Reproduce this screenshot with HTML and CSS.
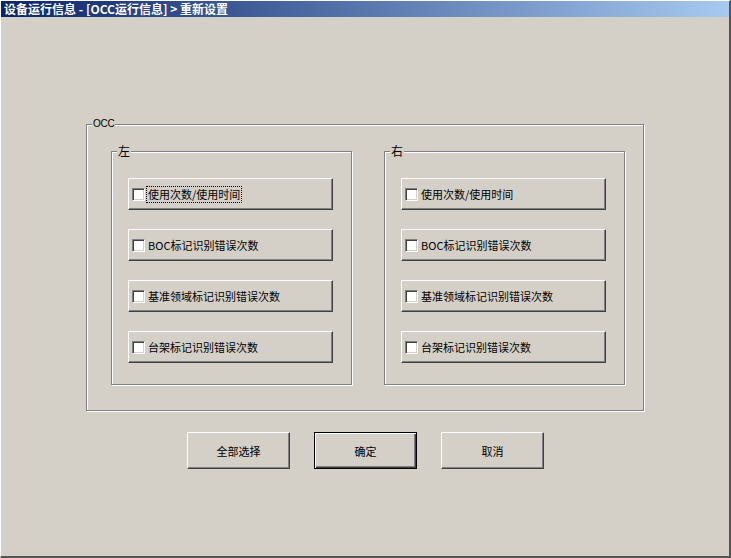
FILE: index.html
```html
<!DOCTYPE html>
<html lang="zh-CN">
<head>
    <meta charset="UTF-8">
    <title>设备运行信息 - [OCC运行信息] > 重新设置</title>
    <link rel="stylesheet" href="styles.css">
</head>
<body>

<div class="window">
    <div class="titlebar">设备运行信息 - [OCC运行信息] &gt; 重新设置</div>

    <div class="content">
        <div class="group occ">
            <span class="group-title">OCC</span>

            <div class="group side">
                <span class="group-title">左</span>
                <label class="check-btn"><span class="box"></span><span class="label focus">使用次数/使用时间</span></label>
                <label class="check-btn"><span class="box"></span><span class="label">BOC标记识别错误次数</span></label>
                <label class="check-btn"><span class="box"></span><span class="label">基准领域标记识别错误次数</span></label>
                <label class="check-btn"><span class="box"></span><span class="label">台架标记识别错误次数</span></label>
            </div>

            <div class="group side">
                <span class="group-title">右</span>
                <label class="check-btn"><span class="box"></span><span class="label">使用次数/使用时间</span></label>
                <label class="check-btn"><span class="box"></span><span class="label">BOC标记识别错误次数</span></label>
                <label class="check-btn"><span class="box"></span><span class="label">基准领域标记识别错误次数</span></label>
                <label class="check-btn"><span class="box"></span><span class="label">台架标记识别错误次数</span></label>
            </div>
        </div>

        <div class="actions">
            <button class="btn">全部选择</button>
            <button class="btn default">确定</button>
            <button class="btn">取消</button>
        </div>
    </div>
</div>

</body>
</html>
```

FILE: styles.css
```css
* {
    box-sizing: border-box;
}
html, body {
    margin: 0;
    padding: 0;
    background: #d4d0c8;
}
body {
    font-family: "Noto Sans CJK SC", "DejaVu Sans", sans-serif;
    font-size: 12px;
    color: #000;
}
.window {
    width: 731px;
    height: 558px;
    background: #d4d0c8;
    border-top: 1px solid #fff;
    border-left: 1px solid #fff;
    border-right: 2px solid #555;
    border-bottom: 2px solid #555;
}
.titlebar {
    height: 16px;
    line-height: 16px;
    padding-left: 3px;
    color: #fff;
    font-weight: bold;
    font-size: 12px;
    background: linear-gradient(to right, #0a246a, #a6caf0);
    white-space: nowrap;
}
.content {
    padding: 107px 0 0 85px;
}
.group {
    position: relative;
    border: 1px solid #808080;
    box-shadow: inset 1px 1px 0 #fff, 1px 1px 0 #fff;
}
.group-title {
    position: absolute;
    top: -8px;
    left: 5px;
    padding: 0 1px;
    background: #d4d0c8;
    line-height: 14px;
    font-size: 11px;
}
.occ {
    width: 558px;
    height: 287px;
    display: flex;
    gap: 32px;
    padding: 26px 0 0 24px;
}
.occ > .group-title {
    font-family: "Liberation Sans", sans-serif;
    font-size: 10px;
    letter-spacing: -0.3px;
}
.side {
    width: 241px;
    height: 234px;
    display: flex;
    flex-direction: column;
    gap: 19px;
    padding: 26px 0 0 16px;
}
.side > .group-title {
    font-size: 12px;
}
.check-btn {
    width: 205px;
    height: 32px;
    display: flex;
    align-items: center;
    padding-left: 3px;
    background: #d4d0c8;
    border: 1px solid;
    border-color: #fff #404040 #404040 #fff;
    box-shadow: inset -1px -1px 0 #808080;
}
.box {
    width: 13px;
    height: 13px;
    background: #fff;
    border: 1px solid;
    border-color: #808080 #fff #fff #808080;
    box-shadow: inset 1px 1px 0 #404040, inset -1px -1px 0 #d4d0c8;
    flex: none;
}
.label {
    margin-left: 2px;
    padding: 0 1px;
    line-height: 15px;
    font-size: 11px;
    white-space: nowrap;
}
.label.focus {
    outline: 1px dotted #000;
}
.actions {
    display: flex;
    gap: 24px;
    padding: 21px 0 0 101px;
}
.btn {
    width: 103px;
    height: 37px;
    padding: 0;
    font-family: inherit;
    font-size: 11px;
    color: #000;
    background: #d4d0c8;
    border: 1px solid;
    border-color: #fff #404040 #404040 #fff;
    box-shadow: inset -1px -1px 0 #808080;
}
.btn.default {
    border: 1px solid #000;
    box-shadow: inset 1px 1px 0 #fff, inset -1px -1px 0 #404040, inset -2px -2px 0 #808080;
}
```
